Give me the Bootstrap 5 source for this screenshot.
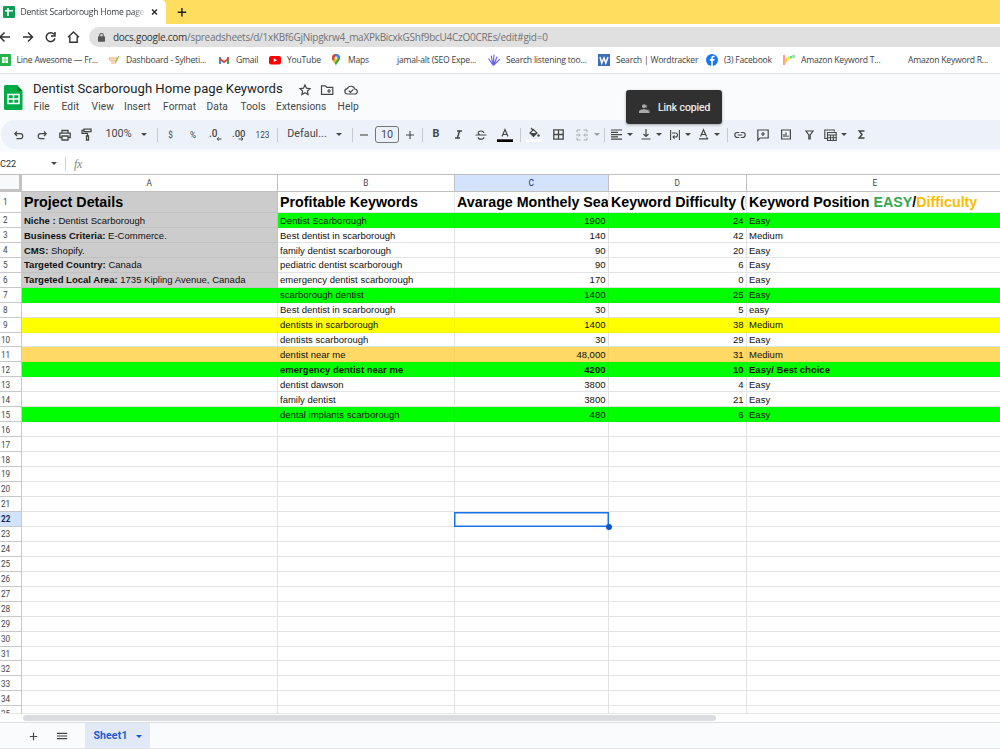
<!DOCTYPE html>
<html lang="en">
<head>
<meta charset="utf-8">
<meta name="viewport" content="width=device-width, initial-scale=1">
<title>Dentist Scarborough Home page Keywords</title>
<link href="https://cdn.jsdelivr.net/npm/bootstrap@5.3.0/dist/css/bootstrap.min.css" rel="stylesheet">
<style>
body{width:1000px;height:750px;overflow:hidden;font-family:Roboto,"Liberation Sans",sans-serif;color:#444746;background:#fff;line-height:1}
svg{display:block;flex:none;overflow:visible}
.chrome{font-family:"Open Sans","Noto Sans",sans-serif}
.tabstrip{height:24px;background:#ffdd5e}
.tab-active{width:166px;background:#fff;border-top-right-radius:5px;padding-left:3px;font-size:8.6px;letter-spacing:-.24px;color:#3c4043}
.tab-title{width:125px;margin-left:5.5px;line-height:14px;white-space:nowrap;overflow:hidden;-webkit-mask:linear-gradient(90deg,#000 90%,transparent 100%)}
.navrow{height:26px;padding-top:3px}
.navicons{width:89px;height:20px;grid-template-columns:16px 23px 23px 23px}
.omnibox{height:20px;background:#e0e0e0;border-radius:10px 0 0 10px;padding-left:9px;font-size:10px;color:#707376;letter-spacing:-.27px}
.omnibox b{font-weight:400;color:#333}
.bookmarks{height:24px;display:grid;grid-template-columns:109.5px 110px 51px 61px 67px 91px 110px 108px 77px 125px 94px;margin-left:-1.5px;font-size:8.6px;letter-spacing:-.22px;color:#3c4043;border-bottom:1px solid #dfe1e5}
.bookmarks>div{display:flex;align-items:center;gap:6px;white-space:nowrap;padding-bottom:3px}
.dochead{height:46px;background:#f9fbfd}
.sheetlogo{width:33px;padding-left:4px;padding-top:11px}
.doctitle{font-size:13.1px;color:#1f1f1f;height:17px;margin-top:6px;line-height:17px;width:265.5px;white-space:nowrap}
.titleicons{gap:9.5px;padding-top:8px}
.menubar{display:grid;grid-template-columns:28px 30px 32.5px 39px 43.5px 34px 35.5px 61.5px 40px;font-size:10.2px;padding-top:5px;padding-left:.6px;letter-spacing:.06px}
.toolbar-wrap{background:#f9fbfd;height:32px}
.tools{height:28.5px;background:#edf2fa;border-radius:14px 0 0 14px;margin-left:1px;padding-left:7px;display:grid;font-size:10.8px;
grid-template-columns:22px 23px 24px 20px 43px 8px 18px 9px 36px 10px 36px 11px 18px 42px 22px 5px 18px 28px 18px 6px 22px 22px 24px 24px 6px 22px 26px 22px 8px 7px 27px 33px 25px 33px 2px 24px 22px 24px 22px 30px 22px}
.tools>div{display:flex;align-items:center;justify-content:center;gap:5px;white-space:nowrap;min-width:0;padding-top:1px}
.tinylabel{font-size:8.3px}
.vsep{width:1px;height:14px;background:#c7cad0;flex:none}
.caret{width:0;height:0;border:3px solid transparent;border-top:3.4px solid #444746;border-bottom:0;flex:none}
.sizebox{width:24px;height:17px;border:1px solid #747775;border-radius:3px;line-height:16px;text-align:center;flex:none}
.namebar{height:22px;font-size:9.2px;letter-spacing:-.1px;color:#333;padding-top:1px}
.namebox{width:66px;height:14px;border-right:1px solid #cfd1d4}
.fxmark{font-family:"Liberation Serif",serif;font-size:12px;color:#85888b;letter-spacing:-.3px}
.sheet{height:539px;overflow:hidden;border-top:1px solid #c0c0c0;font-family:"Liberation Sans",Arial,sans-serif;font-size:9.52px;color:#111}
.grid-row{display:grid;grid-template-columns:22px 256px 177px 154px 138px 257px;height:14.96px}
.grid-row>div{border-right:1px solid #e2e3e3;border-bottom:1px solid #e2e3e3;padding:1px 2.5px 0 2px;display:flex;align-items:center;white-space:nowrap;overflow:hidden;min-width:0}
.grid-row>div.gutter{border-color:#c7c9c9;justify-content:flex-start;padding:1px 0 0 1px;font-family:Roboto;font-size:8.2px;font-weight:400;color:#444746;background:#fff}
.grid-row>div.gutter.one-digit{padding-left:3px}
.grid-row>div.num{justify-content:flex-end;padding-right:2.5px}
.grid-row.heads{height:17px}
.grid-row.heads>div{border-color:#c0c0c0;justify-content:center;font-family:Roboto;font-size:8.3px;color:#444746;padding-top:0}
.grid-row.heads>.corner{background:#f8f9fa;border-right:3px solid #c3c3c3;border-bottom:3px solid #c3c3c3}
.grid-row.first{height:20.9px;font-weight:bold;font-size:14.28px;color:#000}
.grid-row.first>div{white-space:pre;padding-top:0}
.grid-row.first>div:nth-child(n+3){border-right-color:#e8e8e8}
.grid-row.go>.fillable{background:#0f0;border-color:#00f500}
.grid-row.maybe>.fillable{background:#ff0;border-color:#f6f600}
.grid-row.near>.fillable{background:#ffd966;border-color:#f9d35e}
.grid-row>div.details{background:#ccc;border-color:#c2c2c2}
.grid-row.picked>div.gutter,.grid-row.heads>div.picked{background:#d3e3fd;color:#0b2a6b}
.grid-row.picked>div.gutter{font-weight:700}
.grid-row>div.selected{overflow:visible;border:1.5px solid #1a73e8;position:relative;margin-left:-1px;box-shadow:inset 0 0 0 .5px #1a73e8}
.selected::after{content:"";position:absolute;right:-4px;bottom:-4px;width:6px;height:6px;border-radius:50%;background:#0b57d0}
.scroller{height:10px;border-top:1px solid #e4e6e6;border-bottom:1px solid #dcdfe0;padding:1px 0 0 23px}
.thumb{width:693px;height:6px;border-radius:3px;background:#dadce0}
.footer-bar{height:26px;background:#f9fbfd;border-bottom:1px solid #e4e6e8;padding-left:29px}
.sheet-tab{margin-left:17px;width:65px;background:#e1e9f7;color:#1a5cd0;font-weight:700;font-size:10.5px;gap:8px;letter-spacing:.15px;padding-top:2px}
.sheet-tab .caret{border-top-color:#0b57d0}
.toast-note{position:absolute;left:626px;top:90px;width:96px;height:34px;background:#303030;border-radius:3px;color:#f2f2f2;font-size:10.3px;box-shadow:0 1px 3px #0005;padding:2px 0 0 13px;gap:8px;-webkit-text-stroke:.2px}
.easy-word{color:#34a853}
.hard-word{color:#fbbc04}
</style>
</head>
<body class="d-flex flex-column position-relative">
<header class="chrome">
<div class="tabstrip d-flex">
<div class="tab-active d-flex align-items-center">
<svg width="12" height="12" viewBox="0 0 12 12"><rect width="12" height="12" rx="1" fill="#0f9d58"/><path d="M2 4.800h8M5 2v8" stroke="#fff" stroke-width="1.600"/></svg>
<span class="tab-title">Dentist Scarborough Home page Keywords</span>
<svg width="6" height="6" viewBox="0 0 6 6" class="ms-1"><path d="M2 .5l5 5m0-5l-5 5" stroke="#222" stroke-width="1.300"/></svg>
</div>
<svg width="32" height="24" viewBox="0 0 32 24"><path d="M11.700 12.300h8.500M15.900 8v8.500" stroke="#222" stroke-width="1.500"/></svg>
</div>
<div class="navrow d-flex">
<div class="navicons d-grid align-items-center">
<svg width="12" height="12" viewBox="0 0 12 12"><path d="M10 6H0M4.500 1.500L0 6l4.500 4.500" fill="none" stroke="#333" stroke-width="1.500"/></svg>
<svg width="12" height="12" viewBox="0 0 12 12"><path d="M7 6H16.500M12 1.500L16.500 6l-4.500 4.500" fill="none" stroke="#333" stroke-width="1.500"/></svg>
<svg width="12" height="12" viewBox="0 0 12 12"><path d="M15 3.300A4.400 4.400 0 1 0 15.900 7.200M16 1v4h-4" fill="none" stroke="#333" stroke-width="1.500"/></svg>
<svg width="12" height="12" viewBox="0 0 12 12"><path d="M6 6.300L11.500 1l5.500 5.300M7.800 5.500v5.800h7.400V5.500" fill="none" stroke="#333" stroke-width="1.400"/></svg>
</div>
<div class="omnibox flex-grow-1 d-flex align-items-center">
<svg width="7" height="9" viewBox="0 0 7 9" class="me-2"><rect y="3.300" width="7" height="5.500" rx=".7" fill="#555"/><path d="M1.700 4V2.300a1.800 1.800 0 0 1 3.600 0V4" fill="none" stroke="#555" stroke-width="1.100"/></svg>
<span><b>docs.google.com</b>/spreadsheets/d/1xKBf6GjNipgkrw4_maXPkBicxkGShf9bcU4CzO0CREs/edit#gid=0</span>
</div>
</div>
<nav class="bookmarks">
<div><svg width="12" height="12" viewBox="0 0 12 12"><rect width="12" height="12" rx="1" fill="#27b24a"/><path d="M3 3h2.700v2.700H3zM6.300 3H9v2.700H6.300zM3 6.300h2.700V9H3zM6.300 6.300H9V9H6.300z" fill="#fff"/></svg>Line Awesome — Fr...</div>
<div><svg width="12" height="12" viewBox="0 0 12 12"><path d="M1 4h8l-1 3H2.500zM3 9h5" stroke="#f6a766" fill="#fde5cf"/><path d="M7.500 8.500L11 2" stroke="#7ec94c" stroke-width="1.200"/></svg>Dashboard - Sylheti...</div>
<div><svg width="12" height="12" viewBox="0 0 12 12"><path d="M1 10V3h2v7z" fill="#4285f4"/><path d="M9 10V3h2v7z" fill="#34a853"/><path d="M1 3l5 4 5-4v2.500L6 9.300 1 5.500z" fill="#ea4335"/></svg>Gmail</div>
<div><svg width="12" height="12" viewBox="0 0 12 12"><rect x="0" y="2" width="12" height="8.500" rx="2" fill="#f00"/><path d="M4.800 4.300L8 6.200 4.800 8.100z" fill="#fff"/></svg>YouTube</div>
<div><svg width="12" height="12" viewBox="0 0 12 12"><path d="M6 12C5.500 8.500 2 7.500 2 4a4 4 0 0 1 8 0c0 3.500-3.500 4.500-4 8z" fill="#34a853"/><path d="M2 4a4 4 0 0 1 4-4v4L3 6.800A5 5 0 0 1 2 4z" fill="#ea4335"/><path d="M6 0a4 4 0 0 1 4 4L6 4z" fill="#4285f4"/><path d="M3 6.800L6 4l1.500 1.500L4.600 9z" fill="#fbbc04"/><circle cx="6" cy="4" r="1.400" fill="#fff"/></svg>Maps</div>
<div>jamal-alt (SEO Expe...</div>
<div><svg width="12" height="12" viewBox="0 0 12 12"><path d="M5 11L.8 5M5 11L3.300 2M5.300 11L6 1M5.600 11L9 3M5.800 11L11.500 5.500" stroke="#6a62e8" stroke-width="1.200" stroke-linecap="round"/></svg>Search listening too...</div>
<div><svg width="12" height="12" viewBox="0 0 12 12"><rect width="12" height="12" fill="#3c6eb8"/><path d="M2 3l1.800 6L6 4l1.800 5L10 3" fill="none" stroke="#fff" stroke-width="1.500"/></svg>Search | Wordtracker</div>
<div><svg width="12" height="12" viewBox="0 0 12 12"><circle cx="6" cy="6" r="6" fill="#1877f2"/><path d="M6.800 12V6.700h1.500l.3-1.700H6.800V4.200c0-.6.300-.9.900-.9h.9V1.900C7 1.600 5.200 1.900 5.200 3.900V5H3.800v1.700h1.400V12z" fill="#fff"/></svg>(3) Facebook</div>
<div><svg width="12" height="12" viewBox="0 0 12 12"><path d="M1 1v10" stroke="#ff6258" stroke-width="1.300"/><path d="M1.500 9L5 4" stroke="#ffc43b" stroke-width="1.800"/><path d="M4 5.500L7 3" stroke="#eef04a" stroke-width="3"/><path d="M8 4.500V2M10.500 4V1" stroke="#57e58b" stroke-width="2"/></svg>Amazon Keyword T...</div>
<div>Amazon Keyword R...</div>
</nav>
</header>

<section class="dochead d-flex">
<div class="sheetlogo"><svg width="19" height="25" viewBox="0 0 19 25"><path d="M1.500 0H13l5.500 6v17.500a1.500 1.500 0 0 1-1.500 1.500H1.500A1.500 1.500 0 0 1 0 23.500v-22A1.500 1.500 0 0 1 1.500 0z" fill="#00ac47"/><path d="M13 0l5.500 6H13z" fill="#00832d"/><path d="M4 9.500h11v9H4zM4 14h11M9.500 9.500v9" fill="none" stroke="#fff" stroke-width="1.500"/></svg></div>
<div>
<div class="d-flex"><div class="doctitle">Dentist Scarborough Home page Keywords</div>
<div class="titleicons d-flex align-items-center">
<svg width="12" height="12" viewBox="0 0 12 12"><path d="M6 1l1.500 3.200 3.500.4-2.600 2.400.7 3.500L6 8.700 2.900 10.500 3.600 7 1 4.600l3.500-.4z" fill="none" stroke="#444746" stroke-width="1.200"/></svg>
<svg width="14" height="12" viewBox="0 0 14 12"><path d="M1.500 10.300V1.800h4l1.300 1.500h6v7zM9 5v4M7 7h4" fill="none" stroke="#444746" stroke-width="1.200"/></svg>
<svg width="14" height="12" viewBox="0 0 14 12"><path d="M3.700 10A2.600 2.600 0 0 1 3.300 4.700 4 4 0 0 1 10.800 5a2.500 2.500 0 0 1 0 5zM4.800 6.700l1.700 1.600 2.800-2.900" fill="none" stroke="#444746" stroke-width="1.200"/></svg>
</div></div>
<div class="menubar"><span>File</span><span>Edit</span><span>View</span><span>Insert</span><span>Format</span><span>Data</span><span>Tools</span><span>Extensions</span><span>Help</span></div>
</div>
</section>

<section class="toolbar-wrap">
<div class="tools">
<div><svg width="12" height="12" viewBox="0 0 12 12"><path d="M4 2.500L1.800 4.700 4 7M2 4.700h5.300a2.300 2.300 0 0 1 0 4.900H3.500" fill="none" stroke="#444746" stroke-width="1.200"/></svg></div>
<div><svg width="12" height="12" viewBox="0 0 12 12"><path d="M8 2.500l2.200 2.200L8 7M10 4.700H4.700a2.300 2.300 0 0 0 0 4.900h3.800" fill="none" stroke="#444746" stroke-width="1.200"/></svg></div>
<div><svg width="12" height="12" viewBox="0 0 12 12"><path d="M3 4V1.500h6V4M3 8.500H.8V4.200h10.400v4.300H9M3 7h6v4H3z" fill="none" stroke="#444746" stroke-width="1.300"/></svg></div>
<div><svg width="12" height="13" viewBox="0 0 12 13"><path d="M3 1.200h7v2.500H3zM3 2.400H1v3h5.500V8M5.500 8h2v4h-2z" fill="none" stroke="#444746" stroke-width="1.300"/></svg></div>
<div>100%</div><div><i class="caret"></i></div><div><i class="vsep"></i></div>
<div class="tinylabel fs-6-">$</div><div class="tinylabel">%</div>
<div><svg width="14" height="14" viewBox="0 0 14 14"><text x="0" y="8.500" font-size="10" font-weight="500" fill="#444746">.0</text><path d="M12.500 11H8M9.800 9.300L8 11l1.800 1.700" fill="none" stroke="#444746" stroke-width="1"/></svg></div>
<div><svg width="14" height="14" viewBox="0 0 14 14"><text x="0" y="8.500" font-size="9.500" font-weight="500" fill="#444746">.00</text><path d="M6.500 11H11M9.300 9.300L11 11l-1.700 1.700" fill="none" stroke="#444746" stroke-width="1"/></svg></div>
<div class="tinylabel">123</div><div><i class="vsep"></i></div>
<div>Defaul...</div><div><i class="caret"></i></div><div><i class="vsep"></i></div>
<div><svg width="8" height="8" viewBox="0 0 8 8"><path d="M0 4h8" stroke="#444746" stroke-width="1.100"/></svg></div>
<div><span class="sizebox">10</span></div>
<div><svg width="8" height="8" viewBox="0 0 8 8"><path d="M0 4h8M4 0v8" stroke="#444746" stroke-width="1.100"/></svg></div>
<div><i class="vsep"></i></div>
<div class="fw-bold">B</div>
<div><svg width="9" height="9" viewBox="0 0 9 9"><path d="M3 1h5M1 8h5M5.600 1L3.400 8" stroke="#444746" stroke-width="1.500"/></svg></div>
<div><svg width="12" height="10" viewBox="0 0 12 10"><path d="M.5 5h11M8.800 3c0-2.600-5.600-2.600-5.600-.3C3.200 4 4.300 4.500 5 5M3.200 7.200c0 2.600 5.800 2.600 5.700 0" fill="none" stroke="#444746" stroke-width="1.200"/></svg></div>
<div><svg width="16" height="14" viewBox="0 0 16 14"><path d="M5 8.500L8 1.500l3 7M6 6.500h4" fill="none" stroke="#444746" stroke-width="1.200"/><path d="M0 11.300h16v2.700H0z" fill="#000"/></svg></div>
<div><i class="vsep"></i></div>
<div><svg width="16" height="16" viewBox="0 0 16 16"><path d="M4 6l3.500-3.500L11 6 7.500 9.500zM5 1l2.500 2.500" fill="none" stroke="#444746" stroke-width="1.200"/><path d="M4 6h7L7.500 9.500z" fill="#444746"/><circle cx="12.500" cy="8.500" r="1.200" fill="#444746"/><path d="M0 12.500h16v2.500H0z" fill="#fff"/></svg></div>
<div><svg width="11" height="11" viewBox="0 0 11 11"><path d="M.8.800h9.400v9.400H.8zM5.500.800v9.400M.8 5.500h9.400" fill="none" stroke="#444746" stroke-width="1.300"/></svg></div>
<div><svg width="12" height="12" viewBox="0 0 12 12"><path d="M4.500 1H1v2.500M7.500 1H11v2.500M4.500 11H1V8.500M7.500 11H11V8.500M0 6h4M12 6H8M2.800 4.500L4.300 6 2.800 7.500M9.200 4.500L7.700 6l1.500 1.500" fill="none" stroke="#a4a8ae"/></svg></div>
<div><i class="caret opacity-50"></i></div><div><i class="vsep"></i></div>
<div><svg width="11" height="11" viewBox="0 0 11 11"><path d="M0 1h11M0 3.300h7M0 5.600h11M0 7.900h7M0 10.200h11" stroke="#444746" stroke-width="1.200"/></svg><i class="caret"></i></div>
<div><svg width="10" height="11" viewBox="0 0 10 11"><path d="M5 0v7M2.500 5L5 7.500 7.500 5M.500 10h9" fill="none" stroke="#444746" stroke-width="1.200"/></svg><i class="caret"></i></div>
<div><svg width="10" height="10" viewBox="0 0 10 10"><path d="M.6 0v10M9.400 0v10M2 3h3.500a2 2 0 0 1 0 4H3M4.500 5.300L3 7l1.500 1.700" fill="none" stroke="#444746" stroke-width="1.100"/></svg><i class="caret"></i></div>
<div><svg width="10" height="11" viewBox="0 0 10 11"><path d="M1.500 7.500L4.500.800l3 6.700M2.500 5.500h4M0 9.800h9M7.500 8.300L9 9.800" fill="none" stroke="#444746" stroke-width="1.200"/></svg><i class="caret"></i></div>
<div><i class="vsep"></i></div>
<div><svg width="12" height="8" viewBox="0 0 12 8"><path d="M5.200 1.500H3.300a2.500 2.500 0 0 0 0 5h1.900M6.800 1.500h1.900a2.500 2.500 0 0 1 0 5H6.800M3.700 4h4.600" fill="none" stroke="#444746" stroke-width="1.200"/></svg></div>
<div><svg width="12" height="12" viewBox="0 0 12 12"><path d="M.8 11.300V1h10.400v8H3zM6 3v4M4 5h4" fill="none" stroke="#444746" stroke-width="1.200"/></svg></div>
<div><svg width="10" height="11" viewBox="0 0 10 11"><path d="M.6 1h8.800v9H.6zM3 8V5M5 8V3.500M7 8V6.500" fill="none" stroke="#444746" stroke-width="1.200"/></svg></div>
<div><svg width="9" height="10" viewBox="0 0 9 10"><path d="M1 1h7L5.200 5v4H3.800V5z" fill="none" stroke="#444746" stroke-width="1.200"/></svg></div>
<div class="gap-1"><svg width="13" height="12" viewBox="0 0 13 12"><path d="M3.500 9.500h-2.700V1h9.500v1.500M3.500 3.500h8.700v8H3.500zM3.500 6h8.700M3.500 8.700h8.700M6.500 6v5.500M9.300 6v5.500" fill="none" stroke="#444746" stroke-width="1.100"/></svg><i class="caret"></i></div>
<div><svg width="7" height="9" viewBox="0 0 7 9"><path d="M6.500 1H1.200L4 4.500 1.200 8h5.300" fill="none" stroke="#444746" stroke-width="1.500"/></svg></div>
</div>
</section>

<section class="namebar d-flex align-items-center">
<div class="namebox d-flex align-items-center justify-content-between pe-2"><span>C22</span><i class="caret"></i></div>
<span class="fxmark ms-2 fst-italic">fx</span>
</section>

<main class="sheet" id="sheet">
<div class="grid-row heads"><div class="corner"></div><div>A</div><div>B</div><div class="picked">C</div><div>D</div><div>E</div></div>
<div class="grid-row first"><div class="gutter one-digit">1</div><div class="details">Project Details</div><div>Profitable Keywords</div><div>Avarage Monthely Search</div><div>Keyword Difficulty (KD)</div><div>Keyword Position <span class="easy-word">EASY</span>/<span class="hard-word">Difficulty</span></div></div>
</main>
<div class="scroller"><div class="thumb"></div></div>
<footer class="footer-bar d-flex align-items-stretch">
<svg width="39" height="26" viewBox="0 0 39 26"><path d="M.8 13.500h7.400M4.500 9.800v7.400M28 10.300h10.200M28 13h10.200M28 15.700h10.200" stroke="#444746" stroke-width="1.200"/></svg>
<div class="sheet-tab d-flex align-items-center justify-content-center">Sheet1<i class="caret"></i></div>
</footer>
<div class="toast-note d-flex align-items-center"><svg width="11" height="9" viewBox="0 0 11 9"><circle cx="5" cy="2.300" r="2" fill="#aaa"/><path d="M0 9V7.500C0 6 3 5.200 5 5.200s5 .8 5 2.300V9z" fill="#aaa"/><path d="M7 .4a2 2 0 0 1 0 3.800M8.500 5.300C10 5.700 11 6.500 11 7.500V9h-1" fill="#777"/></svg><span>Link copied</span></div>

<script>
const rows = [
  ["<b>Niche :</b>&nbsp;Dentist Scarborough","Dentist Scarborough","1900","24","Easy","go"],
  ["<b>Business Criteria:</b>&nbsp;E-Commerce.","Best dentist in scarborough","140","42","Medium",""],
  ["<b>CMS:</b>&nbsp;Shopify.","family dentist scarborough","90","20","Easy",""],
  ["<b>Targeted Country:</b>&nbsp;Canada","pediatric dentist scarborough","90","6","Easy",""],
  ["<b>Targeted Local Area:</b>&nbsp;1735 Kipling Avenue, Canada","emergency dentist scarborough","170","0","Easy",""],
  ["","scarborough dentist","1400","25","Easy","go"],
  ["","Best dentist in scarborough","30","5","easy",""],
  ["","dentists in scarborough","1400","38","Medium","maybe"],
  ["","dentists scarborough","30","29","Easy",""],
  ["","dentist near me","48,000","31","Medium","near"],
  ["","emergency dentist near me","4200","10","Easy/ Best choice","go fw-bold"],
  ["","dentist dawson","3800","4","Easy",""],
  ["","family dentist","3800","21","Easy",""],
  ["","dental implants scarborough","480","6","Easy","go"]
];
let html = "";
for (let n = 2; n <= 35; n++) {
  const r = rows[n - 2] || ["", "", "", "", "", n === 22 ? "picked" : ""];
  html += `<div class="grid-row ${r[5]}"><div class="gutter ${n < 10 ? "one-digit" : ""}">${n}</div>
    <div class="${n < 7 ? "details" : "fillable"}">${r[0]}</div><div class="fillable">${r[1]}</div>
    <div class="fillable num ${n === 22 ? "selected" : ""}">${r[2]}</div><div class="fillable num">${r[3]}</div><div class="fillable">${r[4]}</div></div>`;
}
document.getElementById("sheet").insertAdjacentHTML("beforeend", html);
</script>
<script src="https://cdn.jsdelivr.net/npm/bootstrap@5.3.0/dist/js/bootstrap.bundle.min.js"></script>
</body>
</html>
